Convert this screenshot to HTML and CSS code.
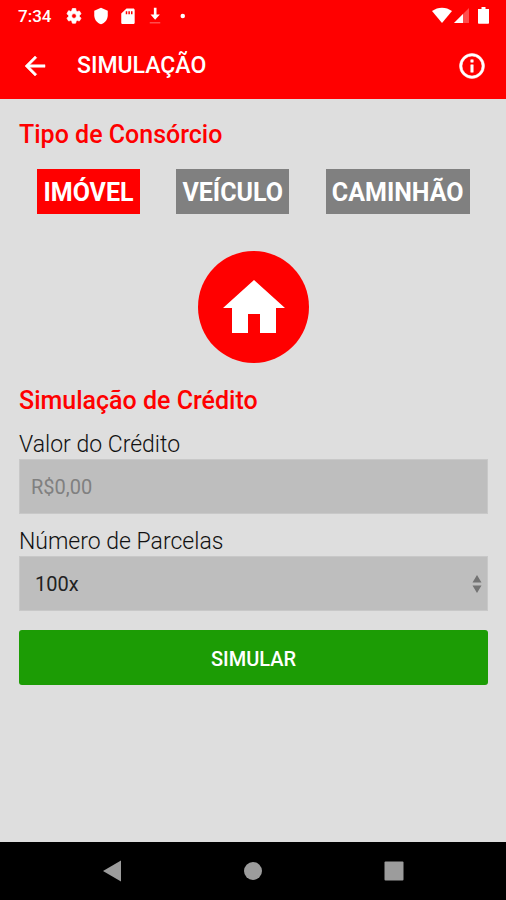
FILE: index.html
```html
<!DOCTYPE html>
<html lang="pt-BR">

<head>
    <meta charset="UTF-8">
    <meta name="viewport" content="width=device-width, initial-scale=1.0">
    <title>Simulação</title>
    <link rel="stylesheet" href="styles.css">
</head>

<body>
    <!-- Header -->
    <header class="header">
        <div class="status-bar">
            <span class="time">7:34</span>
            <div class="status-left">
                <svg width="18" height="18" viewBox="0 0 24 24" fill="currentColor"><path d="M19.14 12.94c.04-.3.06-.61.06-.94s-.02-.64-.07-.94l2.03-1.58c.18-.14.23-.41.12-.61l-1.92-3.32c-.12-.22-.37-.29-.59-.22l-2.39.96c-.5-.38-1.03-.7-1.62-.94l-.36-2.54A.48.48 0 0 0 13.92 2h-3.84c-.24 0-.43.17-.47.41l-.36 2.54c-.59.24-1.13.57-1.62.94l-2.39-.96c-.22-.08-.47 0-.59.22L2.74 8.87c-.12.21-.08.47.12.61l2.03 1.58c-.05.3-.09.63-.09.94s.02.64.07.94l-2.03 1.58c-.18.14-.23.41-.12.61l1.92 3.32c.12.22.37.29.59.22l2.39-.96c.5.38 1.03.7 1.62.94l.36 2.54c.05.24.24.41.48.41h3.84c.24 0 .44-.17.47-.41l.36-2.54c.59-.24 1.13-.56 1.62-.94l2.39.96c.22.08.47 0 .59-.22l1.92-3.32c.12-.22.07-.47-.12-.61zM12 15.2a3.2 3.200 0 1 1 0-6.400 3.200 3.200 0 0 1 0 6.400z" stroke="currentColor"/></svg>
                <svg width="18" height="18" viewBox="0 0 24 24" fill="currentColor"><path d="M12 1L3 5v6c0 5.55 3.84 10.74 9 12 5.16-1.26 9-6.45 9-12V5z"/></svg>
                <svg width="18" height="18" viewBox="0 0 24 24" fill="currentColor"><path fill-rule="evenodd" d="M19 2h-9L3 8.500V21c0 1 .8 1.800 1.800 1.800H19c1 0 1.900-.8 1.900-1.800V4c0-1.100-.9-2-1.900-2zM9 5.500h2v4H9zM12.500 5.500h2v4h-2zM16 5.500h2v4h-2z"/></svg>
                <svg width="18" height="18" viewBox="0 0 24 24" fill="currentColor"><path d="M10.500 1h3.500v9h4.500L12.200 17 6 10h4.500z"/><path d="M5 20h14v2H5z" opacity=".3"/></svg>
                <svg width="18" height="18" viewBox="0 0 24 24" fill="currentColor"><circle cx="13" cy="12" r="3"/></svg>
            </div>
            <div class="status-right">
                <svg width="20" height="18" viewBox="0 0 20 18" fill="currentColor"><path d="M0 4C6 -.5 14 -.5 20 4L10 16z"/></svg>
                <svg width="17" height="18" viewBox="0 0 17 18" fill="currentColor"><path d="M16 1v15H1z" opacity=".3"/><path d="M10 7v9H1z"/></svg>
                <svg class="battery" width="11" height="18" viewBox="0 0 11 18" fill="currentColor"><path d="M3.500 0h4v2H11v14c0 .5-.3.8-.8.8H.8c-.5 0-.8-.3-.8-.8V2h3.500z"/></svg>
            </div>
        </div>
        <div class="app-bar">
            <button class="icon-btn" type="button" aria-label="Voltar">
                <svg width="30" height="30" viewBox="0 0 24 24" fill="currentColor" stroke="currentColor" stroke-width=".4"><path d="M20 11H7.830l5.590-5.590L12 4l-8 8 8 8 1.410-1.410L7.830 13H20z"/></svg>
            </button>
            <h1>SIMULAÇÃO</h1>
            <button class="icon-btn" type="button" aria-label="Informações">
                <svg width="30" height="30" viewBox="0 0 24 24" fill="currentColor" stroke="currentColor" stroke-width=".4"><path d="M11 7h2v2h-2zM11 11h2v6h-2z"/><path d="M12 2a10 10 0 1 0 0 20 10 10 0 0 0 0-20zm0 18a8 8 0 1 1 0-16 8 8 0 0 1 0 16z"/></svg>
            </button>
        </div>
    </header>

    <!-- Main Content -->
    <main>
        <h2>Tipo de Consórcio</h2>
        <div class="types">
            <button class="type active" type="button">IMÓVEL</button>
            <button class="type" type="button">VEÍCULO</button>
            <button class="type" type="button">CAMINHÃO</button>
        </div>

        <div class="type-icon">
            <svg width="62" height="54" viewBox="0 0 62 54" fill="currentColor"><path d="M31 0l31 28h-9v25H37V34H25v19H9V28H0z"/></svg>
        </div>

        <h2>Simulação de Crédito</h2>
        <form>
            <label for="valor">Valor do Crédito</label>
            <input class="field" id="valor" type="text" placeholder="R$0,00">

            <label for="parcelas">Número de Parcelas</label>
            <div class="select-wrap">
                <select class="field" id="parcelas">
                    <option>100x</option>
                </select>
                <svg class="arrows" width="10" height="18" viewBox="0 0 10 18" fill="currentColor"><path d="M5 0l4.500 7.500h-9zM.5 10.500h9L5 18z"/></svg>
            </div>

            <button class="submit" type="button">SIMULAR</button>
        </form>
    </main>

    <!-- System navigation -->
    <nav class="nav-bar">
        <button type="button" aria-label="Voltar">
            <svg width="20" height="22" viewBox="0 0 20 22" fill="currentColor"><path d="M19 .5v21L1 11z"/></svg>
        </button>
        <button type="button" aria-label="Início">
            <svg width="20" height="20" viewBox="0 0 20 20" fill="currentColor"><circle cx="10" cy="10" r="9"/></svg>
        </button>
        <button type="button" aria-label="Recentes">
            <svg width="20" height="20" viewBox="0 0 20 20" fill="currentColor"><rect x=".5" y=".5" width="19" height="19" rx="1"/></svg>
        </button>
    </nav>
</body>

</html>
```
FILE: styles.css
```css
* {
    box-sizing: border-box;
}

body {
    margin: 0;
    min-height: 100vh;
    display: flex;
    flex-direction: column;
    background: #dedede;
    font-family: Roboto, Arial, sans-serif;
}

button,
input,
select {
    font-family: inherit;
}

button {
    border: 0;
    cursor: pointer;
}

svg {
    display: block;
}

/* Header */
.header {
    background: #ff0000;
    color: white;
}

.status-bar {
    display: flex;
    align-items: center;
    height: 32px;
    padding: 0 17px 0 18px;
}

.time {
    font-size: 17px;
    font-weight: 500;
}

.status-left {
    display: flex;
    gap: 9px;
    margin-left: 14px;
}

.status-right {
    display: flex;
    gap: 1px;
    margin-left: auto;
}

.battery {
    margin-left: 7px;
}

.app-bar {
    display: flex;
    align-items: center;
    height: 67px;
    padding: 0 19px 0 20px;
}

.icon-btn {
    padding: 0;
    background: none;
    color: white;
}

.app-bar h1 {
    flex: 1;
    margin: 0 0 0 27px;
    font-size: 23px;
    font-weight: 500;
}

/* Main */
main {
    flex: 1;
    padding: 20px 18px 20px 19px;
}

h2 {
    margin: 0;
    font-size: 25px;
    line-height: 32px;
    font-weight: 500;
    color: #ff0000;
}

.types {
    display: flex;
    justify-content: space-around;
    margin-top: 18px;
}

.type {
    height: 45px;
    padding: 2px 6px 0;
    background: #808080;
    color: white;
    font-size: 25px;
    font-weight: 700;
}

.type.active {
    background: #ff0000;
}

.type-icon {
    display: flex;
    justify-content: center;
    align-items: center;
    width: 111px;
    height: 112px;
    margin: 37px auto 22px;
    border-radius: 50%;
    background: #ff0000;
    color: white;
}

/* Form */
form {
    display: flex;
    flex-direction: column;
}

label {
    margin-top: 14px;
    font-size: 23px;
    line-height: 28px;
    font-weight: 300;
    color: #111;
}

.field {
    display: block;
    width: 100%;
    height: 55px;
    padding: 0 11px;
    border: 1px solid #c8c8c8;
    border-radius: 0;
    background: #bebebe;
    color: #222;
    font-size: 20px;
    appearance: none;
}

.field::placeholder {
    color: #808080;
    opacity: 1;
}

.select-wrap {
    position: relative;
}

.select-wrap .field {
    padding: 0 15px;
}

.arrows {
    position: absolute;
    right: 6px;
    top: 50%;
    transform: translateY(-50%);
    color: #737373;
    pointer-events: none;
}

.submit {
    height: 55px;
    margin-top: 19px;
    padding-top: 4px;
    border-radius: 3px;
    background: #1c9c05;
    color: white;
    font-size: 20px;
    font-weight: 500;
}

/* System navigation */
.nav-bar {
    display: flex;
    justify-content: space-around;
    align-items: center;
    height: 58px;
    padding: 0 42px;
    background: black;
}

.nav-bar button {
    padding: 0;
    background: none;
    color: #9c9c9c;
}
```
